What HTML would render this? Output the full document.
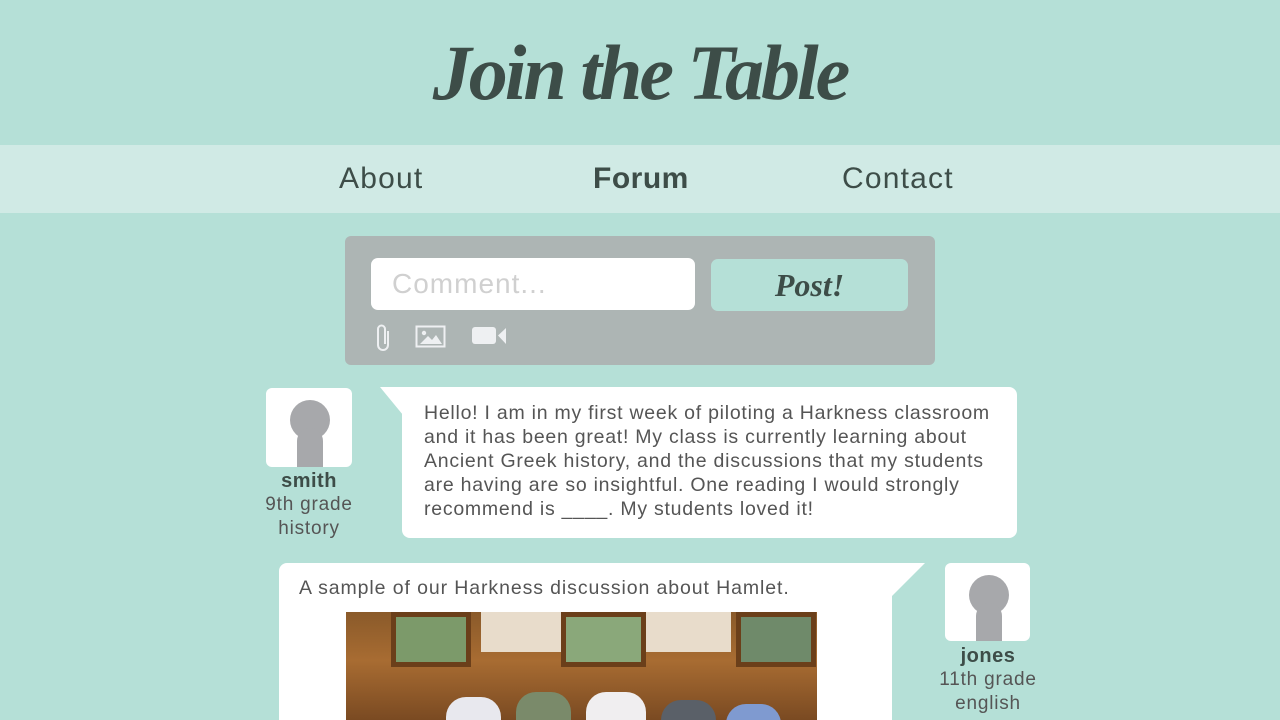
<!DOCTYPE html>
<html><head><meta charset="utf-8"><style>
*{margin:0;padding:0;box-sizing:border-box}
html,body{width:1280px;height:720px;overflow:hidden}
body{background:#b5e0d7;font-family:"Liberation Sans",sans-serif;position:relative;color:#555}
.abs{position:absolute}
.title{left:0;width:1280px;top:28px;text-align:center;font-family:"Liberation Serif","DejaVu Serif",serif;font-style:italic;font-weight:bold;font-size:78px;color:#3d4d48;letter-spacing:-3px}
.nav{left:0;top:145px;width:1280px;height:68px;background:#d0eae5}
.nav span{position:absolute;top:17px;font-size:30px;color:#3d4d48;letter-spacing:1.2px}
.box{left:345px;top:236px;width:590px;height:129px;background:#adb5b4;border-radius:6px}
.inp{left:371px;top:258px;width:324px;height:52px;background:#fff;border-radius:7px;font-size:28px;color:#d0d0d0;padding:10px 21px;letter-spacing:1px}
.btn{left:711px;top:259px;width:197px;height:52px;background:#b5e0d7;border-radius:7px;text-align:center;font-family:"Liberation Serif",serif;font-style:italic;font-weight:bold;font-size:32px;color:#3d4d48;line-height:52px}
.av{width:86px;height:79px;background:#fff;border-radius:6px;overflow:hidden}
.head{position:absolute;left:24px;top:12px;width:40px;height:40px;border-radius:50%;background:#a7a8ab}
.body{position:absolute;left:31px;top:40px;width:26px;height:50px;border-radius:13px 13px 0 0;background:#a7a8ab}
.name{text-align:center;font-weight:bold;font-size:20px;color:#3d4d48;letter-spacing:0.5px}
.sub{text-align:center;font-size:19px;color:#555;line-height:24px;letter-spacing:0.8px}
.b1{left:402px;top:387px;width:615px;height:151px;background:#fff;border-radius:0 8px 8px 8px;padding:14px 10px 0 22px;font-size:19.5px;line-height:24px;color:#555;letter-spacing:0.75px}
.b2{left:279px;top:563px;width:613px;height:157px;background:#fff;border-radius:8px 0 0 0;padding:14px 20px;font-size:19.5px;color:#555;letter-spacing:0.9px}
</style></head><body>
<div class="abs title">Join the Table</div>
<div class="abs nav"><span style="left:339px">About</span><span style="left:593px;font-weight:bold;letter-spacing:0.5px">Forum</span><span style="left:842px">Contact</span></div>
<div class="abs box"></div>
<div class="abs inp">Comment...</div>
<div class="abs btn">Post!</div>
<svg class="abs" style="left:374px;top:323px" width="20" height="30" viewBox="0 0 20 30"><path d="M14 8 V22 a5 5 0 0 1 -10 0 V6 a3.5 3.5 0 0 1 7 0 V21" fill="none" stroke="#eef0f2" stroke-width="2"/></svg>
<svg class="abs" style="left:415px;top:325px" width="32" height="24"><rect x="1.5" y="1.5" width="28" height="20" fill="none" stroke="#eef0f2" stroke-width="2"/><circle cx="9" cy="8" r="2.2" fill="#eef0f2"/><path d="M5 19 L13 11 L17 15 L21 10 L27 19Z" fill="#eef0f2"/></svg>
<svg class="abs" style="left:472px;top:326px" width="36" height="20"><rect x="0" y="1" width="24" height="17" rx="3" fill="#eef0f2"/><path d="M26 9.5 L34 2 V18Z" fill="#eef0f2"/></svg>

<div class="abs av" style="left:266px;top:388px"><div class="head"></div><div class="body"></div></div>
<div class="abs" style="left:250px;top:470px;width:118px"><div class="name">smith</div><div class="sub">9th grade<br>history</div></div>
<svg class="abs" style="left:380px;top:387px" width="24" height="30"><path d="M0 0 H23 V28Z" fill="#fff"/></svg>
<div class="abs b1">Hello! I am in my first week of piloting a Harkness classroom and it has been great! My class is currently learning about Ancient Greek history, and the discussions that my students are having are so insightful. One reading I would strongly recommend is ____. My students loved it!</div>

<div class="abs b2">A sample of our Harkness discussion about Hamlet.</div>
<svg class="abs" style="left:891px;top:563px" width="35" height="34"><path d="M0 0 H34 L1 33Z" fill="#fff"/></svg>
<div class="abs" style="left:346px;top:612px;width:471px;height:108px;background:linear-gradient(180deg,#8a5a2a 0%,#a86c32 45%,#7a4a22 100%);overflow:hidden">
<div class="abs" style="left:45px;top:0;width:80px;height:55px;background:#7c9a6a;border:5px solid #6b3f1a"></div>
<div class="abs" style="left:135px;top:0;width:80px;height:40px;background:#e8dccb"></div>
<div class="abs" style="left:215px;top:0;width:85px;height:55px;background:#8aa87a;border:5px solid #6b3f1a"></div>
<div class="abs" style="left:300px;top:0;width:85px;height:40px;background:#e8dccb"></div>
<div class="abs" style="left:390px;top:0;width:80px;height:55px;background:#6f8a6a;border:5px solid #6b3f1a"></div>
<div class="abs" style="left:100px;top:85px;width:55px;height:30px;background:#e8e8ee;border-radius:20px 20px 0 0"></div>
<div class="abs" style="left:170px;top:80px;width:55px;height:30px;background:#7a8a6a;border-radius:20px 20px 0 0"></div>
<div class="abs" style="left:240px;top:80px;width:60px;height:30px;background:#f0eef0;border-radius:20px 20px 0 0"></div>
<div class="abs" style="left:315px;top:88px;width:55px;height:30px;background:#5a6068;border-radius:20px 20px 0 0"></div>
<div class="abs" style="left:380px;top:92px;width:55px;height:30px;background:#7f9ad0;border-radius:20px 20px 0 0"></div>
</div>
<div class="abs av" style="left:945px;top:563px;width:85px;height:78px"><div class="head"></div><div class="body"></div></div>
<div class="abs" style="left:928px;top:645px;width:120px"><div class="name">jones</div><div class="sub">11th grade<br>english</div></div>
</body></html>
